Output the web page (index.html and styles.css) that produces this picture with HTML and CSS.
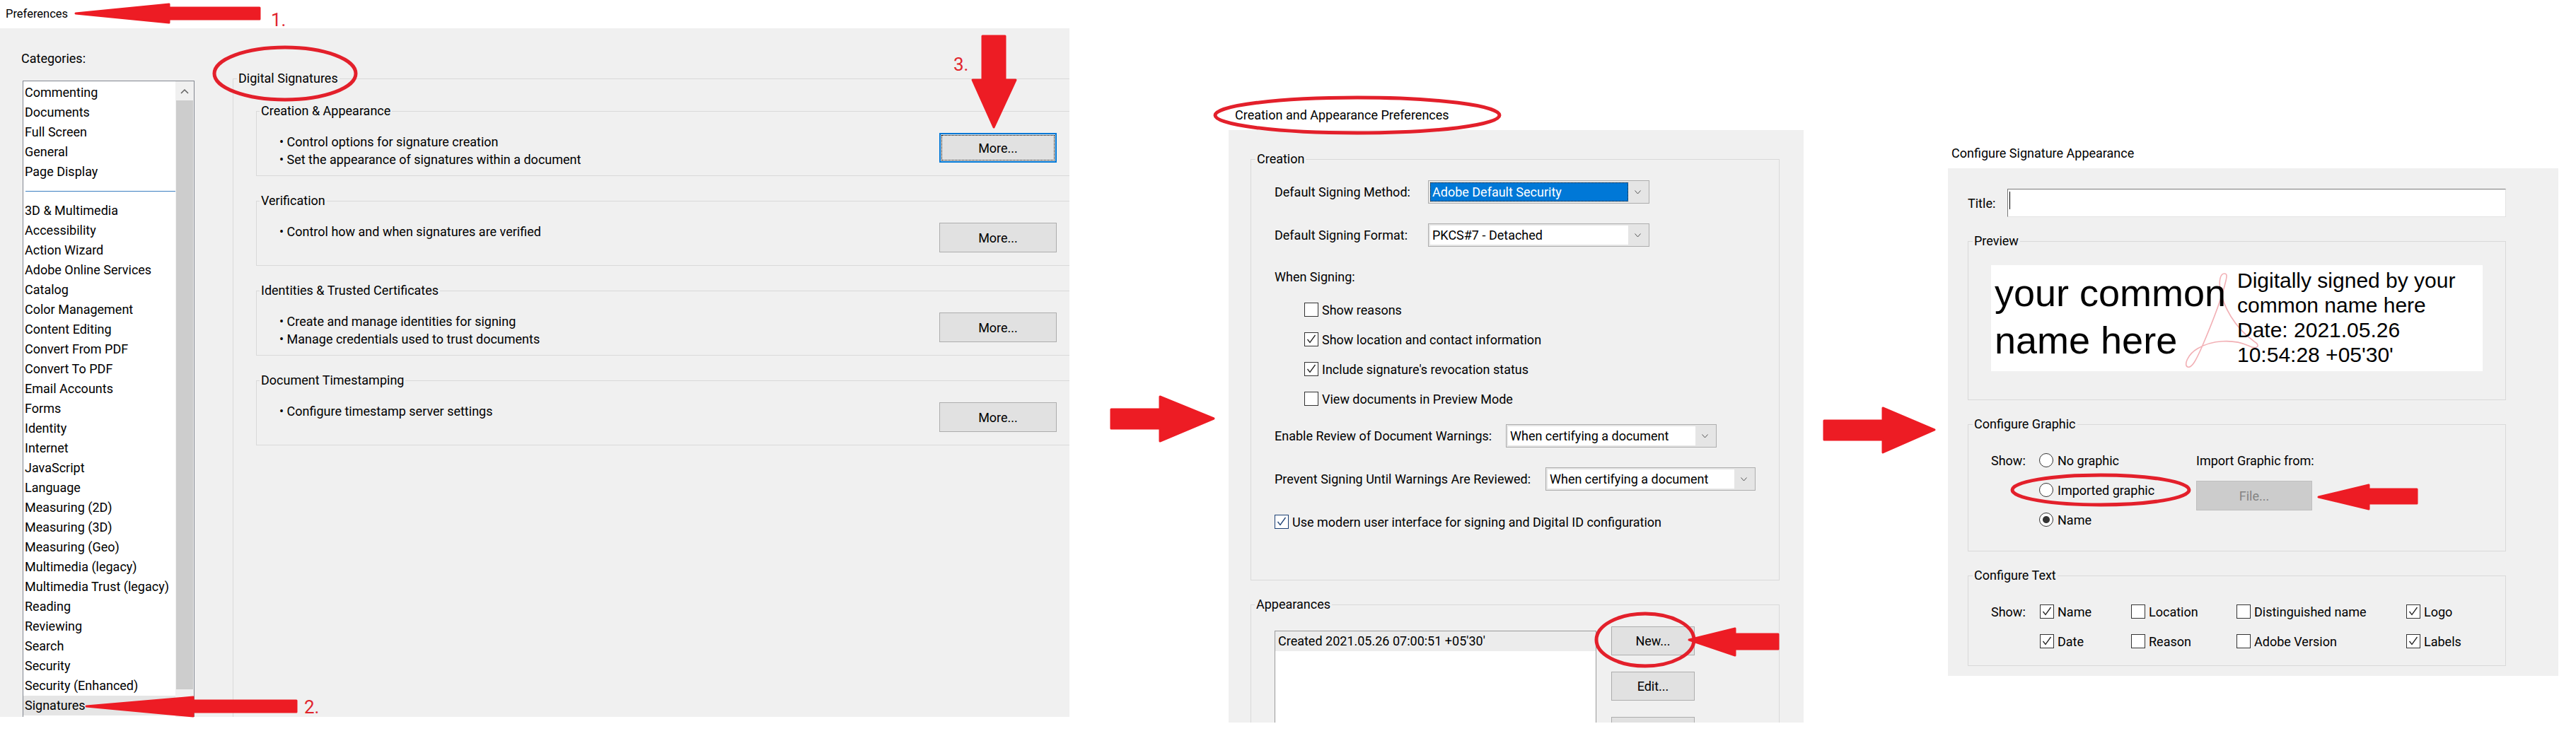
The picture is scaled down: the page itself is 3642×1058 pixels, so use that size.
FILE: index.html
```html
<!DOCTYPE html>
<html lang="en">
  <head>
    <meta charset="UTF-8" />
    <meta name="viewport" content="width=device-width, initial-scale=1.0" />
    <title>Signature preferences</title>
    <link rel="stylesheet" href="styles.css">
  </head>
  <body>
    <div class="canvas">
      <!-- 1. Preferences dialog -->
      <section class="win win-prefs">
        <div class="win-title">Preferences</div>
        <div class="win-body prefs-body">
          <div class="cat-col">
            <div class="cat-label">Categories:</div>
            <div class="cat-list">
              <ul class="cat-items">
                <li>Commenting</li>
                <li>Documents</li>
                <li>Full Screen</li>
                <li>General</li>
                <li>Page Display</li>
                <li class="sep"></li>
                <li>3D &amp; Multimedia</li>
                <li>Accessibility</li>
                <li>Action Wizard</li>
                <li>Adobe Online Services</li>
                <li>Catalog</li>
                <li>Color Management</li>
                <li>Content Editing</li>
                <li>Convert From PDF</li>
                <li>Convert To PDF</li>
                <li>Email Accounts</li>
                <li>Forms</li>
                <li>Identity</li>
                <li>Internet</li>
                <li>JavaScript</li>
                <li>Language</li>
                <li>Measuring (2D)</li>
                <li>Measuring (3D)</li>
                <li>Measuring (Geo)</li>
                <li>Multimedia (legacy)</li>
                <li>Multimedia Trust (legacy)</li>
                <li>Reading</li>
                <li>Reviewing</li>
                <li>Search</li>
                <li>Security</li>
                <li>Security (Enhanced)</li>
                <li class="selected">Signatures</li>
              </ul>
              <div class="scrollbar">
                <div class="sb-up">
                  <svg width="12" height="8" viewBox="0 0 12 8"><path d="M1 7 L6 2 L11 7" fill="none" stroke="#606060" stroke-width="1.5"/></svg>
                </div>
                <div class="sb-thumb"></div>
              </div>
            </div>
          </div>

          <fieldset class="group group-main">
            <legend>Digital Signatures</legend>
            <div class="group-main-inner">
              <fieldset class="group sub">
                <legend>Creation &amp; Appearance</legend>
                <div class="sub-row">
                  <ul class="bullets">
                    <li>• Control options for signature creation</li>
                    <li>• Set the appearance of signatures within a document</li>
                  </ul>
                  <button class="btn btn-more is-focus">More...</button>
                </div>
              </fieldset>
              <fieldset class="group sub">
                <legend>Verification</legend>
                <div class="sub-row">
                  <ul class="bullets">
                    <li>• Control how and when signatures are verified</li>
                  </ul>
                  <button class="btn btn-more">More...</button>
                </div>
              </fieldset>
              <fieldset class="group sub">
                <legend>Identities &amp; Trusted Certificates</legend>
                <div class="sub-row">
                  <ul class="bullets">
                    <li>• Create and manage identities for signing</li>
                    <li>• Manage credentials used to trust documents</li>
                  </ul>
                  <button class="btn btn-more">More...</button>
                </div>
              </fieldset>
              <fieldset class="group sub">
                <legend>Document Timestamping</legend>
                <div class="sub-row">
                  <ul class="bullets">
                    <li>• Configure timestamp server settings</li>
                  </ul>
                  <button class="btn btn-more">More...</button>
                </div>
              </fieldset>
            </div>
          </fieldset>
        </div>
      </section>

      <!-- 2. Creation and Appearance Preferences -->
      <section class="win win-create">
        <div class="win-title">Creation and Appearance Preferences</div>
        <div class="win-body create-body">
          <fieldset class="group creation">
            <legend>Creation</legend>
            <div class="creation-inner">
              <div class="form-row">
                <span class="lbl lbl-method">Default Signing Method:</span>
                <div class="select sel-signing">
                  <span class="sel-value is-hl">Adobe Default Security</span>
                  <span class="sel-arrow"><svg width="9" height="6" viewBox="0 0 9 6"><path d="M0.5 0.5 L4.5 5 L8.5 0.5" fill="none" stroke="#555" stroke-width="1"/></svg></span>
                </div>
              </div>
              <div class="form-row row-format">
                <span class="lbl lbl-method">Default Signing Format:</span>
                <div class="select sel-signing">
                  <span class="sel-value">PKCS#7 - Detached</span>
                  <span class="sel-arrow"><svg width="9" height="6" viewBox="0 0 9 6"><path d="M0.5 0.5 L4.5 5 L8.5 0.5" fill="none" stroke="#555" stroke-width="1"/></svg></span>
                </div>
              </div>
              <div class="when">When Signing:</div>
              <div class="checks">
                <div class="check-row"><span class="cb"></span>Show reasons</div>
                <div class="check-row">
                  <span class="cb"><svg width="18" height="18" viewBox="0 0 18 18"><path d="M3.5 9 L7 13.5 L14.5 3" fill="none" stroke="#222" stroke-width="1.3"/></svg></span>Show location and contact information
                </div>
                <div class="check-row">
                  <span class="cb"><svg width="18" height="18" viewBox="0 0 18 18"><path d="M3.5 9 L7 13.5 L14.5 3" fill="none" stroke="#222" stroke-width="1.3"/></svg></span>Include signature's revocation status
                </div>
                <div class="check-row"><span class="cb"></span>View documents in Preview Mode</div>
              </div>
              <div class="form-row row-review">
                <span class="lbl lbl-review">Enable Review of Document Warnings:</span>
                <div class="select sel-review">
                  <span class="sel-value">When certifying a document</span>
                  <span class="sel-arrow"><svg width="9" height="6" viewBox="0 0 9 6"><path d="M0.5 0.5 L4.5 5 L8.5 0.5" fill="none" stroke="#555" stroke-width="1"/></svg></span>
                </div>
              </div>
              <div class="form-row row-prevent">
                <span class="lbl lbl-prevent">Prevent Signing Until Warnings Are Reviewed:</span>
                <div class="select sel-prevent">
                  <span class="sel-value">When certifying a document</span>
                  <span class="sel-arrow"><svg width="9" height="6" viewBox="0 0 9 6"><path d="M0.5 0.5 L4.5 5 L8.5 0.5" fill="none" stroke="#555" stroke-width="1"/></svg></span>
                </div>
              </div>
              <div class="check-row row-modern">
                <span class="cb is-hover"><svg width="18" height="18" viewBox="0 0 18 18"><path d="M3.5 9 L7 13.5 L14.5 3" fill="none" stroke="#1b3f73" stroke-width="1.3"/></svg></span>Use modern user interface for signing and Digital ID configuration
              </div>
            </div>
          </fieldset>

          <fieldset class="group appear">
            <legend>Appearances</legend>
            <div class="appear-inner">
              <ul class="app-list">
                <li class="selected">Created 2021.05.26 07:00:51 +05'30'</li>
              </ul>
              <div class="app-btns">
                <button class="btn btn-small">New...</button>
                <button class="btn btn-small">Edit...</button>
                <button class="btn btn-small"></button>
              </div>
            </div>
          </fieldset>
        </div>
      </section>

      <!-- 3. Configure Signature Appearance -->
      <section class="win win-config">
        <div class="win-title">Configure Signature Appearance</div>
        <div class="win-body config-body">
          <div class="title-row">
            <span class="title-lbl">Title:</span>
            <div class="title-input"><span class="caret"></span></div>
          </div>

          <fieldset class="group preview">
            <legend>Preview</legend>
            <div class="preview-inner">
              <div class="sig-preview">
                <svg class="sig-logo" width="73" height="137" viewBox="0 0 73 137">
                  <path d="M58 4 C52 4 50 14 52 26 C56 50 72 80 100 100 C110 106 104 112 92 106 C70 96 40 98 20 110 C6 118 0 134 6 136 C12 138 18 126 26 108 C38 80 54 40 60 14 C62 6 61 4 58 4 Z" fill="none" stroke="#f2b0b5" stroke-width="1.6"/>
                </svg>
                <div class="sig-name">your common<br>name here</div>
                <div class="sig-details">Digitally signed by your<br>common name here<br>Date: 2021.05.26<br>10:54:28 +05'30'</div>
              </div>
            </div>
          </fieldset>

          <fieldset class="group graphic">
            <legend>Configure Graphic</legend>
            <div class="graphic-inner">
              <span class="g-show">Show:</span>
              <div class="radio-row g-r1"><span class="rb"></span>No graphic</div>
              <span class="g-import">Import Graphic from:</span>
              <div class="radio-row g-r2"><span class="rb"></span>Imported graphic</div>
              <button class="btn btn-file g-file" disabled>File...</button>
              <div class="radio-row g-r3"><span class="rb is-on"></span>Name</div>
            </div>
          </fieldset>

          <fieldset class="group textcfg">
            <legend>Configure Text</legend>
            <div class="text-inner">
              <span>Show:</span>
              <div class="check-row"><span class="cb"><svg width="18" height="18" viewBox="0 0 18 18"><path d="M3.5 9 L7 13.5 L14.5 3" fill="none" stroke="#222" stroke-width="1.3"/></svg></span>Name</div>
              <div class="check-row"><span class="cb"></span>Location</div>
              <div class="check-row"><span class="cb"></span>Distinguished name</div>
              <div class="check-row"><span class="cb"><svg width="18" height="18" viewBox="0 0 18 18"><path d="M3.5 9 L7 13.5 L14.5 3" fill="none" stroke="#222" stroke-width="1.3"/></svg></span>Logo</div>
              <span></span>
              <div class="check-row"><span class="cb"><svg width="18" height="18" viewBox="0 0 18 18"><path d="M3.5 9 L7 13.5 L14.5 3" fill="none" stroke="#222" stroke-width="1.3"/></svg></span>Date</div>
              <div class="check-row"><span class="cb"></span>Reason</div>
              <div class="check-row"><span class="cb"></span>Adobe Version</div>
              <div class="check-row"><span class="cb"><svg width="18" height="18" viewBox="0 0 18 18"><path d="M3.5 9 L7 13.5 L14.5 3" fill="none" stroke="#222" stroke-width="1.3"/></svg></span>Labels</div>
            </div>
          </fieldset>
        </div>
      </section>

      <!-- red annotations drawn over the screenshots -->
      <svg class="marks" width="3642" height="1058" viewBox="0 0 3642 1058">
        <g fill="#ed1c24" stroke="#ed1c24" stroke-width="3" stroke-linejoin="round">
          <polygon points="107,19 239,6 239,11 367,11 367,27 239,27 239,32"/>
          <polygon points="122,999 273,986 273,991 419,991 419,1007 273,1007 273,1013"/>
          <polygon points="1389,51 1421,51 1421,113 1436,113 1405,180 1375,113 1389,113"/>
          <polygon points="1571,579 1640,579 1640,561 1716,592 1640,624 1640,606 1571,606"/>
          <polygon points="2579,595 2662,595 2662,577 2735,608 2662,640 2662,622 2579,622"/>
          <polygon points="2388,905 2453,889 2453,897 2514,897 2514,918 2453,918 2453,927"/>
          <polygon points="3278,703 3349,686 3349,692 3417,692 3417,712 3349,712 3349,720"/>
        </g>
        <g fill="none" stroke="#e3202b" stroke-width="5">
          <ellipse cx="403" cy="104" rx="100" ry="37"/>
          <ellipse cx="1919" cy="163" rx="201" ry="25"/>
          <ellipse cx="2326" cy="905" rx="69" ry="37"/>
          <ellipse cx="2970" cy="693" rx="125" ry="21"/>
        </g>
      </svg>
      <span class="mark-num num-1">1.</span>
      <span class="mark-num num-2">2.</span>
      <span class="mark-num num-3">3.</span>
    </div>
  </body>
</html>
```

FILE: styles.css
```css
* {
  box-sizing: border-box;
}

body {
  margin: 0;
  background: #fff;
  font-family: Roboto, "Segoe UI", "Noto Sans", sans-serif;
  font-size: 18px;
  color: #000;
}

.canvas {
  position: relative;
  width: 3642px;
  height: 1058px;
  display: flex;
  align-items: flex-start;
  overflow: hidden;
}

/* windows */
.win {
  flex: none;
}

.win-title {
  line-height: 24px;
  white-space: nowrap;
}

.win-body {
  background: #f0f0f0;
  overflow: hidden;
}

/* group boxes */
.group {
  margin: 0;
  padding: 0;
  min-width: 0;
  border: 1px solid #d9d9d9;
}

.group > legend {
  padding: 0 2px;
  line-height: 24px;
  white-space: nowrap;
}

.btn {
  display: block;
  padding: 0;
  font: inherit;
  color: #000;
  background: #e1e1e1;
  border: 1px solid #adadad;
}

.btn.is-focus {
  border: 2px solid #0078d7;
  outline: 1px dotted #000;
  outline-offset: -4px;
}

.check-row {
  display: flex;
  align-items: center;
  height: 42px;
  white-space: nowrap;
}

.cb {
  flex: none;
  display: flex;
  align-items: center;
  justify-content: center;
  width: 20px;
  height: 20px;
  margin-right: 5px;
  background: #fff;
  border: 1px solid #333;
}

.cb.is-hover {
  border-color: #1b3f73;
}

/* 1. preferences */
.win-prefs {
  width: 1512px;
}

.win-prefs .win-title {
  height: 40px;
  padding: 8px 0 0 8px;
  font-size: 16.5px;
}

.prefs-body {
  display: flex;
  height: 974px;
}

.cat-col {
  flex: none;
  width: 329px;
  padding: 31px 0 0 30px;
}

.cat-label {
  line-height: 24px;
}

.cat-list {
  display: flex;
  width: 243px;
  height: 900px;
  margin: 19px 0 0 2px;
  background: #fff;
  border: 1px solid #828790;
  border-bottom: 0;
}

.cat-items {
  flex: none;
  width: 215px;
  margin: 0;
  padding: 2px 0 0;
  list-style: none;
}

.cat-items li {
  height: 28px;
  line-height: 28px;
  padding-left: 2px;
  white-space: nowrap;
}

.cat-items li.sep {
  height: 14px;
  margin: 0 0 13px 3px;
  border-bottom: 1px solid #3c7fc1;
}

.cat-items li.selected {
  background: #e5e5e5;
}

.scrollbar {
  flex: none;
  display: flex;
  flex-direction: column;
  width: 26px;
  background: #f0f0f0;
}

.sb-up {
  display: flex;
  align-items: center;
  justify-content: center;
  height: 27px;
}

.sb-thumb {
  height: 833px;
  margin: 0 1px;
  background: #cdcdcd;
}

.group-main {
  flex: none;
  width: 1250px;
  height: 1000px;
  margin-top: 59px;
}

.group-main > legend {
  margin-left: 5px;
}

.group-main-inner {
  padding: 22px 0 0 32px;
}

.sub {
  width: 1200px;
  margin-bottom: 23px;
}

.sub > legend {
  margin-left: 4px;
}

.sub-row {
  display: grid;
  grid-template-columns: 933px 166px;
  align-items: start;
  min-height: 79px;
  padding: 19px 0 10px 32px;
}

.bullets {
  margin: 0;
  padding: 0;
  list-style: none;
  line-height: 25px;
  white-space: nowrap;
}

.btn-more {
  width: 166px;
  height: 42px;
}

/* 2. creation and appearance */
.win-create {
  width: 813px;
  margin: 151px 0 0 225px;
}

.win-create .win-title {
  height: 33px;
  padding-left: 9px;
}

.create-body {
  height: 838px;
  padding: 29px 34px 0 31px;
}

.creation > legend {
  margin-left: 6px;
}

.creation-inner {
  padding: 18px 0 61px 33px;
}

.form-row {
  display: flex;
  align-items: center;
  height: 33px;
}

.row-format,
.row-prevent {
  margin-top: 28px;
}

.row-review {
  margin-top: 15px;
}

.lbl {
  flex: none;
  white-space: nowrap;
}

.lbl-method {
  width: 217px;
}

.lbl-review {
  width: 327px;
}

.lbl-prevent {
  width: 383px;
}

.select {
  display: flex;
  height: 33px;
  padding: 2px;
  background: #e5e5e5;
  border: 1px solid #adadad;
}

.sel-signing {
  width: 313px;
}

.sel-review {
  width: 298px;
}

.sel-prevent {
  width: 297px;
}

.sel-value {
  flex: 1;
  padding-left: 3px;
  line-height: 27px;
  background: #fff;
  white-space: nowrap;
}

.sel-value.is-hl {
  color: #fff;
  background: #0078d7;
  outline: 1px dotted #1a1a1a;
  outline-offset: -1px;
}

.sel-arrow {
  flex: none;
  display: flex;
  align-items: center;
  justify-content: center;
  width: 27px;
}

.when {
  margin-top: 31px;
  line-height: 24px;
}

.checks {
  margin-top: 13px;
  padding-left: 42px;
}

.row-modern {
  margin-top: 23px;
}

.appear {
  height: 400px;
  margin-top: 22px;
}

.appear > legend {
  margin-left: 5px;
}

.appear-inner {
  display: flex;
  align-items: flex-start;
  padding: 19px 0 0 33px;
}

.app-list {
  flex: none;
  width: 455px;
  height: 300px;
  margin: 6px 0 0;
  padding: 0;
  list-style: none;
  background: #fff;
  border: 1px solid #9a9a9a;
}

.app-list li {
  line-height: 28px;
  padding-left: 4px;
  white-space: nowrap;
}

.app-list li.selected {
  background: #ececec;
}

.app-btns {
  display: flex;
  flex-direction: column;
  gap: 23px;
  margin-left: 21px;
}

.btn-small {
  width: 118px;
  height: 41px;
}

/* 3. configure signature appearance */
.win-config {
  width: 863px;
  margin: 205px 0 0 204px;
}

.win-config .win-title {
  height: 33px;
  padding-left: 5px;
}

.config-body {
  height: 718px;
  padding: 29px 74px 0 28px;
}

.title-row {
  display: flex;
  align-items: center;
}

.title-lbl {
  width: 56px;
}

.title-input {
  flex: 1;
  height: 40px;
  padding: 3px 0 0 2px;
  background: #fff;
  border: 1px solid;
  border-color: #7a7a7a #e3e3e3 #e3e3e3 #7a7a7a;
}

.caret {
  display: block;
  width: 1px;
  height: 25px;
  background: #000;
}

.preview,
.graphic,
.textcfg {
  margin-top: 22px;
}

.preview > legend,
.graphic > legend,
.textcfg > legend {
  margin-left: 6px;
}

.preview-inner {
  padding: 22px 32px 40px;
}

.sig-preview {
  position: relative;
  display: flex;
  height: 150px;
  background: #fff;
  font-family: "Liberation Sans", Arial, sans-serif;
  white-space: nowrap;
}

.sig-logo {
  position: absolute;
  left: 272px;
  top: 8px;
  overflow: visible;
}

.sig-name {
  position: relative;
  flex: none;
  width: 348px;
  padding: 6px 0 0 5px;
  font-size: 54px;
  line-height: 67px;
}

.sig-details {
  position: relative;
  padding-top: 4px;
  font-size: 30px;
  line-height: 35px;
}

.graphic-inner {
  display: grid;
  grid-template-columns: 68px 222px auto;
  grid-template-rows: repeat(3, 42px);
  align-items: center;
  padding: 18px 0 23px 32px;
}

.g-show {
  grid-area: 1 / 1;
}

.g-r1 {
  grid-area: 1 / 2;
}

.g-import {
  grid-area: 1 / 3;
}

.g-r2 {
  grid-area: 2 / 2;
}

.g-file {
  grid-area: 2 / 3;
  align-self: start;
  margin-top: 8px;
}

.g-r3 {
  grid-area: 3 / 2;
}

.radio-row {
  display: flex;
  align-items: center;
  white-space: nowrap;
}

.rb {
  flex: none;
  width: 20px;
  height: 20px;
  margin-right: 6px;
  background: #fff;
  border: 1px solid #333;
  border-radius: 50%;
}

.rb.is-on {
  background: radial-gradient(circle, #333 0 4.5px, #fff 5.5px);
}

.btn-file {
  width: 164px;
  height: 42px;
  color: #838383;
  background: #ccc;
  border-color: #bfbfbf;
}

.text-inner {
  display: grid;
  grid-template-columns: 69px 129px 149px 240px auto;
  grid-template-rows: repeat(2, 42px);
  align-items: center;
  padding: 18px 0 13px 32px;
}

/* annotations */
.marks {
  position: absolute;
  left: 0;
  top: 0;
  pointer-events: none;
}

.mark-num {
  position: absolute;
  font-size: 26px;
  line-height: 26px;
  color: #e0242c;
}

.num-1 {
  left: 383px;
  top: 15px;
}

.num-2 {
  left: 430px;
  top: 987px;
}

.num-3 {
  left: 1348px;
  top: 78px;
}
```
